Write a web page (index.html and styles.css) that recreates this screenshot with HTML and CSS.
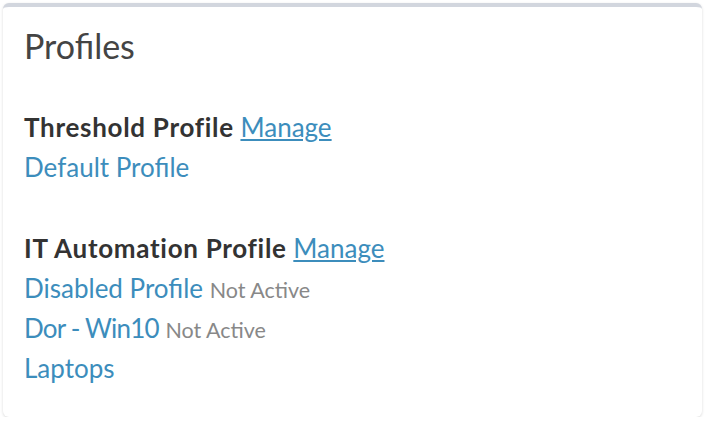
FILE: index.html
```html
<!DOCTYPE html>
<html lang="en">
<head>
  <meta charset="UTF-8">
  <meta name="viewport" content="width=device-width, initial-scale=1.0">
  <title>Profiles</title>
  <link rel="stylesheet" href="styles.css">
</head>
<body>
  <div class="box">
    <h3 class="box-title">Profiles</h3>

    <div class="group">
      <div><strong>Threshold Profile</strong> <a href="#" class="manage">Manage</a></div>
      <div><a href="#">Default Profile</a></div>
    </div>

    <div class="group">
      <div><strong>IT Automation Profile</strong> <a href="#" class="manage">Manage</a></div>
      <div><a href="#">Disabled Profile</a> <span class="muted">Not Active</span></div>
      <div><a href="#" class="tight">Dor - Win10</a> <span class="muted">Not Active</span></div>
      <div><a href="#">Laptops</a></div>
    </div>
  </div>
</body>
</html>
```

FILE: styles.css
```css
body {
  font-family: Lato, "Open Sans", sans-serif;
  font-size: 26px;
  line-height: 40px;
  margin: 0;
  padding: 3px 4px 0 3px;
  background-color: #fff;
  color: #333;
}
a {
  color: #3c8dbc;
  text-decoration: none;
}
.box {
  background-color: #fff;
  border-top: 4px solid #d2d6de;
  border-radius: 6px;
  box-shadow: 0 1px 3px rgba(0, 0, 0, 0.15);
  padding: 19px 21px 29px;
}
.box-title {
  margin: 0;
  font-size: 34px;
  font-weight: normal;
  line-height: 40px;
  color: #444;
}
.group {
  margin-top: 41px;
}
.manage {
  text-decoration: underline;
}
.tight {
  letter-spacing: -0.8px;
}
strong {
  font-weight: bold;
  letter-spacing: 0.7px;
}
.muted {
  color: #888;
  font-size: 21.5px;
  line-height: 1;
}
```
